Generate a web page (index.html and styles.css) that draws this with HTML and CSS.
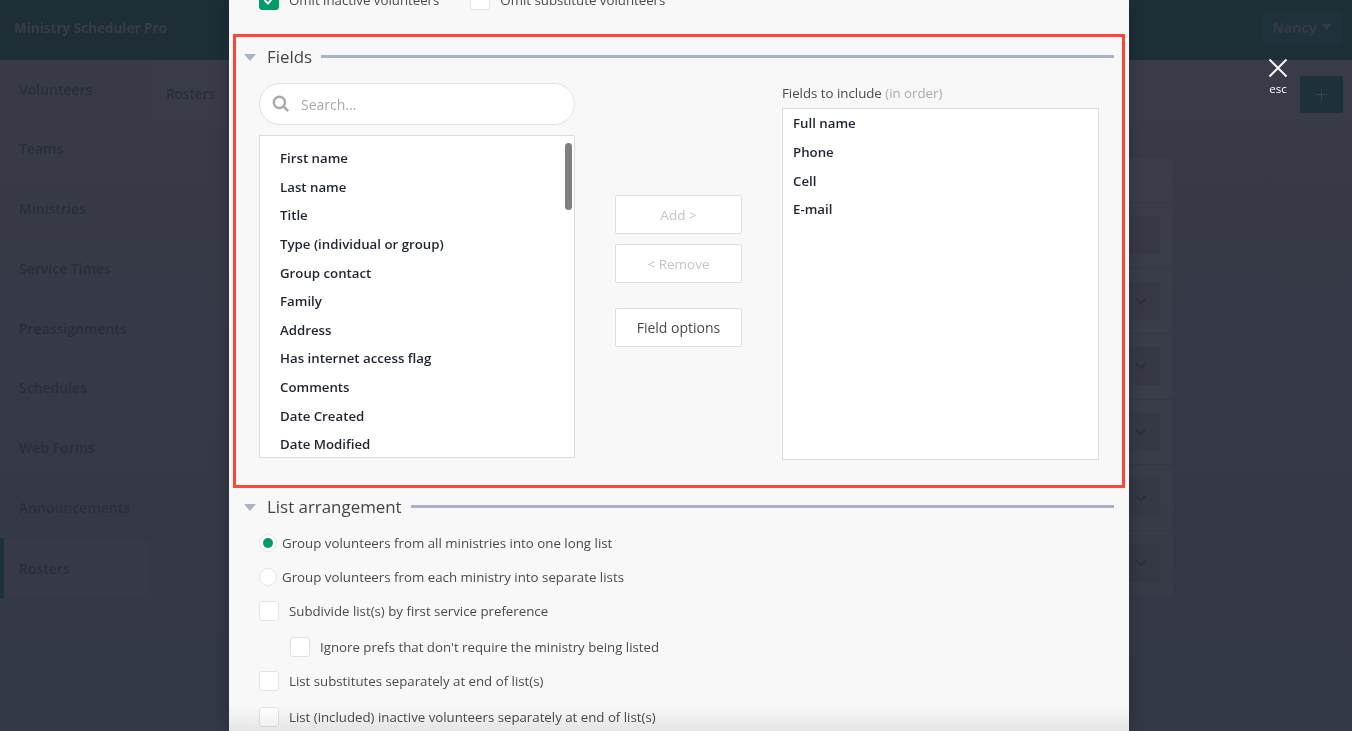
FILE: index.html
```html
<!DOCTYPE html>
<html lang="en">
<head>
<meta charset="utf-8">
<title>Ministry Scheduler Pro</title>
<link rel="stylesheet" href="styles.css">
</head>
<body>
<div class="app">
  <header class="topbar">
    <div class="brand">Ministry Scheduler Pro</div>
    <div class="user">Nancy <span class="caret"></span></div>
  </header>
  <div class="app-body">
    <nav class="sidebar">
      <a class="nav-item">Volunteers</a>
      <a class="nav-item">Teams</a>
      <a class="nav-item">Ministries</a>
      <a class="nav-item">Service Times</a>
      <a class="nav-item">Preassignments</a>
      <a class="nav-item">Schedules</a>
      <a class="nav-item">Web Forms</a>
      <a class="nav-item">Announcements</a>
      <a class="nav-item active">Rosters</a>
    </nav>
    <main class="page">
      <div class="page-head">
        <span class="page-title">Rosters</span>
        <span class="plus">+</span>
      </div>
      <div class="card">
        <div class="card-top"></div>
        <div class="card-row"><span class="chev-box"></span></div>
        <div class="card-row"><span class="chev-box"><svg class="chev" viewBox="0 0 12 8"><path d="M1 1.5 6 6.2 11 1.5"/></svg></span></div>
        <div class="card-row"><span class="chev-box"><svg class="chev" viewBox="0 0 12 8"><path d="M1 1.5 6 6.2 11 1.5"/></svg></span></div>
        <div class="card-row"><span class="chev-box"><svg class="chev" viewBox="0 0 12 8"><path d="M1 1.5 6 6.2 11 1.5"/></svg></span></div>
        <div class="card-row"><span class="chev-box"><svg class="chev" viewBox="0 0 12 8"><path d="M1 1.5 6 6.2 11 1.5"/></svg></span></div>
        <div class="card-row"><span class="chev-box"><svg class="chev" viewBox="0 0 12 8"><path d="M1 1.5 6 6.2 11 1.5"/></svg></span></div>
      </div>
    </main>
  </div>
</div>

<div class="modal">
  <div class="modal-inner">
    <div class="omit-row">
      <label class="check-item omit-first"><span class="box checked"><svg viewBox="0 0 20 20"><path d="M5.5 10 9 13.5 15 6.5"/></svg></span>Omit inactive volunteers</label>
      <label class="check-item"><span class="box"></span>Omit substitute volunteers</label>
    </div>

    <section class="fields-section">
      <div class="section-head">
        <span class="tri"></span><h2 class="section-title">Fields</h2><span class="rule"></span>
      </div>
      <div class="fields-body">
        <div class="col-left">
          <div class="search">
            <svg class="search-icon" viewBox="0 0 18 18"><circle cx="7.4" cy="7.4" r="5.6"/><path d="M11.6 11.6 16.2 16.2"/></svg>
            <span class="search-ph">Search...</span>
          </div>
          <div class="listbox source">
            <ul class="items">
              <li>First name</li>
              <li>Last name</li>
              <li>Title</li>
              <li>Type (individual or group)</li>
              <li>Group contact</li>
              <li>Family</li>
              <li>Address</li>
              <li>Has internet access flag</li>
              <li>Comments</li>
              <li>Date Created</li>
              <li>Date Modified</li>
            </ul>
            <span class="thumb"></span>
          </div>
        </div>
        <div class="col-mid">
          <button class="btn disabled">Add &gt;</button>
          <button class="btn disabled">&lt; Remove</button>
          <button class="btn options">Field options</button>
        </div>
        <div class="col-right">
          <div class="include-label">Fields to include <span class="muted">(in order)</span></div>
          <div class="listbox target">
            <ul class="items">
              <li>Full name</li>
              <li>Phone</li>
              <li>Cell</li>
              <li>E-mail</li>
            </ul>
          </div>
        </div>
      </div>
    </section>

    <section class="arrange-section">
      <div class="section-head">
        <span class="tri"></span><h2 class="section-title">List arrangement</h2><span class="rule"></span>
      </div>
      <div class="options-list">
        <label class="radio-item r1"><span class="radio on"></span>Group volunteers from all ministries into one long list</label>
        <label class="radio-item r2"><span class="radio"></span>Group volunteers from each ministry into separate lists</label>
        <label class="check-item c1"><span class="box"></span>Subdivide list(s) by first service preference</label>
        <label class="check-item c2"><span class="box"></span>Ignore prefs that don't require the ministry being listed</label>
        <label class="check-item c3"><span class="box"></span>List substitutes separately at end of list(s)</label>
        <label class="check-item c4"><span class="box"></span>List (included) inactive volunteers separately at end of list(s)</label>
      </div>
    </section>
  </div>
  <div class="fade"></div>
</div>

<div class="close">
  <svg class="close-x" viewBox="0 0 20 20"><path d="M1.5 1.5 18.5 18.5M18.5 1.5 1.5 18.5"/></svg>
  <span class="close-label">esc</span>
</div>
</body>
</html>
```

FILE: styles.css
```css
* { box-sizing: border-box; }
html, body { margin: 0; height: 100%; overflow: hidden; }
body { font-family: "Open Sans", "Liberation Sans", sans-serif; font-size: 13px; color: #4a4a4a; background: #353947; }

/* dimmed application behind the dialog */
.app { height: 731px; display: flex; flex-direction: column; background: linear-gradient(#393a48, #333846); }
.topbar { height: 60px; flex: none; background: #1d2e37; display: flex; align-items: center; justify-content: space-between; padding: 0 10px 0 14px; }
.brand { font-size: 13.5px; font-weight: 700; color: #383c49; margin-top: -4px; }
.user { width: 80px; height: 34px; margin-top: -4px; padding-bottom: 2px; background: #1f323b; border-radius: 4px; font-size: 14px; font-weight: 700; color: #363a47; display: flex; align-items: center; justify-content: center; gap: 5px; }
.caret { width: 0; height: 0; border: 5px solid transparent; border-top: 6px solid #363a47; border-bottom: 0; }
.app-body { flex: 1; display: flex; min-height: 0; }
.sidebar { width: 150px; flex: none; display: flex; flex-direction: column; }
.nav-item { height: 59.75px; padding: 0 0 1.5px 19px; display: flex; align-items: center; font-size: 14px; font-weight: 600; color: #2a2d3b; }
.nav-item.active { border-left: 4px solid #1e3039; padding: 0 0 0 15px; border-top: 1px solid #333543; background: #363947; }
.page { flex: 1; min-width: 0; display: flex; flex-direction: column; }
.page-head { height: 67px; background: #3a3b49; display: flex; align-items: center; justify-content: space-between; padding: 0 9px 0 15px; border-left: 1px solid #383a47; }
.page-title { font-size: 13.5px; font-weight: 600; color: #2a2d3b; }
.plus { width: 43px; height: 37px; margin-top: 1px; background: #1e303a; border-radius: 2px; color: #3b4250; font-size: 24px; font-weight: 300; line-height: 35px; text-align: center; }
.card { width: 924px; margin: 30px 0 0 100px; border: 1px solid rgba(0, 0, 0, .06); background: rgba(255, 255, 255, .015); }
.card-top { height: 44px; }
.card-row { height: 65.6px; border-top: 1px solid rgba(0, 0, 0, .06); display: flex; align-items: center; justify-content: flex-end; padding-right: 13px; }
.chev-box { width: 60px; height: 38px; background: rgba(0, 0, 0, .05); display: flex; align-items: center; justify-content: flex-end; padding-right: 13px; }
.chev { width: 12px; height: 8px; fill: none; stroke: #2c2f3c; stroke-width: 2; }

/* dialog */
.modal { position: absolute; left: 229px; top: 0; width: 900px; height: 731px; background: #f8f8f8; overflow: hidden; box-shadow: 0 0 14px rgba(0, 0, 0, .22); }
.modal-inner { display: flex; flex-direction: column; }
.omit-row { margin-top: -9px; height: 18px; padding-left: 30px; display: flex; align-items: center; }
.omit-first { margin-right: 31px; }
.box { width: 20px; height: 20px; flex: none; margin-right: 10px; background: #fff; border: 1px solid #e3e3e3; border-radius: 3px; display: block; }
.box svg { display: block; width: 20px; height: 20px; margin: -1px; fill: none; stroke: #fff; stroke-width: 2; }
.box.checked { background: #049b6a; border-color: #049b6a; }
.check-item { display: flex; align-items: center; height: 20px; font-size: 13.25px; color: #4a4a4a; }
.radio-item { display: flex; align-items: center; height: 20px; font-size: 13.3px; color: #4a4a4a; }

.fields-section { margin: 25px 4px 0; height: 454px; border: 3px solid #fb4733; padding: 8px 8px 0 8px; }
.section-head { height: 24px; display: flex; align-items: center; }
.tri { width: 0; height: 0; flex: none; border: 6.5px solid transparent; border-top: 7px solid #a9b2c6; border-bottom: 0; margin-right: 11px; }
.section-title { margin: 0 9px 0 0; font-size: 16.9px; font-weight: 400; color: #444; line-height: 24px; }
.rule { flex: 1; height: 3px; background: #a9b2c6; margin-top: -1px; }
.fields-body { display: flex; margin: 14px 0 0 15px; }
.col-left { width: 316px; flex: none; }
.search { height: 42px; background: #fff; border: 1px solid #e2e2e2; border-radius: 21px; display: flex; align-items: center; padding-left: 12px; }
.search-icon { width: 18px; height: 18px; fill: none; stroke: #aaa; stroke-width: 2.4; margin-right: 11px; }
.search-ph { font-size: 14px; color: #a8a8a8; }
.listbox { position: relative; background: #fff; border: 1px solid #dcdcdc; overflow: hidden; }
.source { height: 323px; margin-top: 10px; }
.target { height: 352px; }
.items { list-style: none; margin: 0; padding: 0; font-size: 13.25px; font-weight: 600; color: #1f2433; }
.items li { height: 28.6px; line-height: 28.6px; }
.source .items { padding: 8.3px 0 0 20px; }
.target .items { padding: 0.3px 0 0 10px; }
.target .items li:nth-child(n+3) { position: relative; top: 0.4px; }
.thumb { position: absolute; right: 2px; top: 7px; width: 7px; height: 67px; background: #808080; border-radius: 4px; }
.col-mid { width: 127px; flex: none; margin-left: 40px; padding-top: 112px; display: flex; flex-direction: column; gap: 10px; }
.btn { height: 39px; width: 127px; padding: 0; background: #fff; border: 1px solid #dedede; border-radius: 2px; font: 400 13.5px "Open Sans", "Liberation Sans", sans-serif; color: #4a4a4a; }
.btn.disabled { color: #c4c4c4; }
.btn.options { margin-top: 15px; font-size: 14px; }
.col-right { width: 317px; flex: none; margin-left: 40px; }
.include-label { height: 25px; line-height: 20px; font-size: 13.25px; color: #4a4a4a; }
.muted { color: #aaa; }

.arrange-section { margin: 7px 15px 0 15px; }
.options-list { margin: 14px 0 0 15px; display: flex; flex-direction: column; }
.radio { width: 18px; height: 18px; flex: none; margin-right: 5px; border: 1px solid #e3e3e3; border-radius: 50%; background: #fff; position: relative; }
.radio.on::after { content: ""; position: absolute; left: 3px; top: 3px; width: 10px; height: 10px; border-radius: 50%; background: #049b6a; }
.r2 { margin-top: 14px; }
.c1 { margin-top: 14px; }
.c2 { margin-top: 16px; margin-left: 31px; }
.c3 { margin-top: 14px; }
.c4 { margin-top: 16px; }
.fade { position: absolute; left: 0; right: 0; bottom: 0; height: 24px; background: linear-gradient(rgba(236, 236, 236, 0), #ececec); mix-blend-mode: multiply; }

.close { position: absolute; left: 1262px; top: 58px; width: 32px; display: flex; flex-direction: column; align-items: center; color: #fff; }
.close-x { width: 20px; height: 20px; fill: none; stroke: #f4f4f4; stroke-width: 2; }
.close-label { font-size: 11.5px; line-height: 14px; margin-top: 4px; }
```
